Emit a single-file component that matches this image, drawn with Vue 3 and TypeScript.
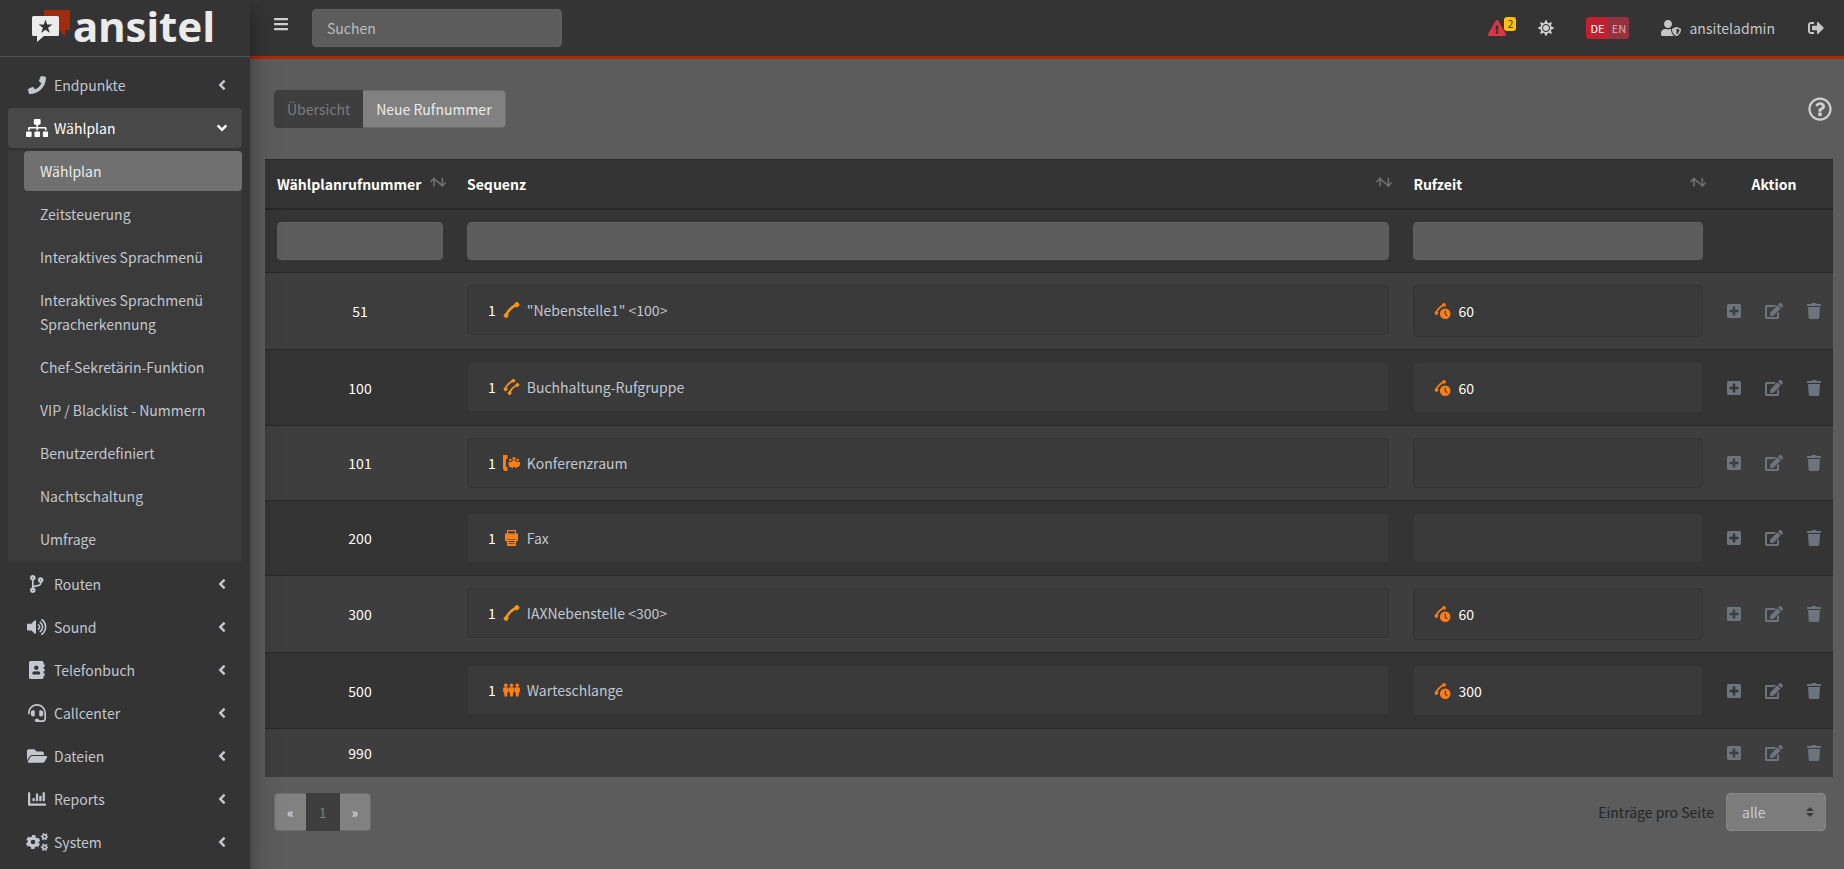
<script setup lang="ts">
import { h, ref } from 'vue'

interface IconDef {
  w: number
  h: number
  body: string
}

const fa = (w: number, d: string): IconDef => ({ w, h: 512, body: `<path d="${d}"/>` })

const icons: Record<string, IconDef> = {
  bars: fa(448, 'M16 132h416c8.8 0 16-7.2 16-16V76c0-8.8-7.2-16-16-16H16C7.2 60 0 67.2 0 76v40c0 8.8 7.2 16 16 16zm0 160h416c8.8 0 16-7.2 16-16v-40c0-8.8-7.2-16-16-16H16c-8.8 0-16 7.2-16 16v40c0 8.8 7.2 16 16 16zm0 160h416c8.8 0 16-7.2 16-16v-40c0-8.8-7.2-16-16-16H16c-8.8 0-16 7.2-16 16v40c0 8.8 7.2 16 16 16z'),
  phone: fa(512, 'M493.4 24.6l-104-24c-11.3-2.6-22.9 3.3-27.5 13.9l-48 112c-4.2 9.8-1.4 21.3 6.9 28l60.6 49.6c-36 76.7-98.9 140.5-177.2 177.2l-49.6-60.6c-6.8-8.3-18.2-11.1-28-6.9l-112 48C3.9 366.5-2 378.1.6 389.4l24 104C27.1 504.2 36.7 512 48 512c256.1 0 464-207.5 464-464 0-11.2-7.7-20.9-18.6-23.4z'),
  sitemap: fa(640, 'M128 352H32c-17.67 0-32 14.33-32 32v96c0 17.67 14.33 32 32 32h96c17.67 0 32-14.33 32-32v-96c0-17.67-14.33-32-32-32zm-24-80h192v48h48v-48h192v48h48v-57.59c0-21.17-17.23-38.41-38.41-38.41H344v-64h40c17.67 0 32-14.33 32-32V32c0-17.67-14.33-32-32-32H256c-17.67 0-32 14.33-32 32v96c0 17.67 14.33 32 32 32h40v64H94.41C73.23 224 56 241.23 56 262.41V320h48v-48zm264 80h-96c-17.67 0-32 14.33-32 32v96c0 17.67 14.33 32 32 32h96c17.67 0 32-14.33 32-32v-96c0-17.67-14.33-32-32-32zm240 0h-96c-17.67 0-32 14.33-32 32v96c0 17.67 14.33 32 32 32h96c17.67 0 32-14.33 32-32v-96c0-17.67-14.33-32-32-32z'),
  branch: fa(384, 'M384 144c0-44.2-35.8-80-80-80s-80 35.8-80 80c0 36.4 24.3 67.1 57.5 76.8-.6 16.1-4.2 28.5-11 36.9-15.4 19.2-49.3 22.4-85.2 25.7-28.2 2.6-57.4 5.4-81.3 16.9v-144c32.5-10.2 56-40.5 56-76.3 0-44.2-35.8-80-80-80S0 35.8 0 80c0 35.8 23.5 66.1 56 76.3v199.3C23.5 365.9 0 396.2 0 432c0 44.2 35.8 80 80 80s80-35.8 80-80c0-34-21.2-63.1-51.2-74.6 3.1-5.2 7.8-9.8 14.9-13.4 16.2-8.2 40.4-10.4 66.1-12.8 42.2-3.9 90-8.4 118.2-43.4 14-17.4 21.1-39.8 21.6-67.9 31.6-10.8 54.4-40.7 54.4-75.9zM80 64c8.8 0 16 7.2 16 16s-7.2 16-16 16-16-7.2-16-16 7.2-16 16-16zm0 384c-8.8 0-16-7.2-16-16s7.2-16 16-16 16 7.2 16 16-7.2 16-16 16zm224-320c8.8 0 16 7.2 16 16s-7.2 16-16 16-16-7.2-16-16 7.2-16 16-16z'),
  volume: {
    w: 576,
    h: 512,
    body: '<path d="M215.03 71.05L126.06 160H24c-13.26 0-24 10.74-24 24v144c0 13.25 10.74 24 24 24h102.06l88.97 88.95c15.03 15.03 40.97 4.47 40.97-16.97V88.02c0-21.46-25.96-31.98-40.97-16.97z"/><path fill="none" stroke="currentColor" stroke-width="46" stroke-linecap="round" d="M326 196a72 72 0 0 1 0 120M376 124a164 164 0 0 1 0 264M424 50a256 256 0 0 1 0 412"/>'
  },
  book: fa(448, 'M436 160c6.6 0 12-5.4 12-12v-40c0-6.6-5.4-12-12-12h-20V48c0-26.5-21.5-48-48-48H48C21.5 0 0 21.5 0 48v416c0 26.5 21.5 48 48 48h320c26.5 0 48-21.5 48-48v-48h20c6.6 0 12-5.4 12-12v-40c0-6.6-5.4-12-12-12h-20v-64h20c6.6 0 12-5.4 12-12v-40c0-6.6-5.4-12-12-12h-20v-64h20zm-228-32c35.3 0 64 28.7 64 64s-28.7 64-64 64-64-28.7-64-64 28.7-64 64-64zm112 236.8c0 10.6-10 19.2-22.4 19.2H118.4C106 384 96 375.4 96 364.8v-19.2c0-31.8 30.1-57.6 67.2-57.6h5c12.3 5.1 25.7 8 39.8 8s27.6-2.9 39.8-8h5c37.1 0 67.2 25.8 67.2 57.6v19.2z'),
  headset: fa(512, 'M192 208c0-17.67-14.33-32-32-32h-16c-35.35 0-64 28.65-64 64v48c0 35.35 28.65 64 64 64h16c17.67 0 32-14.33 32-32V208zm176 144c35.35 0 64-28.65 64-64v-48c0-35.35-28.65-64-64-64h-16c-17.67 0-32 14.33-32 32v112c0 17.67 14.33 32 32 32h16zM256 0C113.18 0 4.58 118.83 0 256v16c0 8.84 7.16 16 16 16h16c8.84 0 16-7.16 16-16v-16c0-114.69 93.31-208 208-208s208 93.31 208 208h-.12c.08 2.43.12 165.72.12 165.72 0 23.35-18.93 42.28-42.28 42.28H320c0-26.51-21.49-48-48-48h-32c-26.51 0-48 21.49-48 48s21.49 48 48 48h181.72c49.86 0 90.28-40.42 90.28-90.28V256C507.42 118.83 398.82 0 256 0z'),
  folder: fa(576, 'M572.694 292.093L500.27 416.248A63.997 63.997 0 0 1 444.989 448H45.025c-18.523 0-30.064-20.093-20.731-36.093l72.424-124.155A64 64 0 0 1 152 256h399.964c18.523 0 30.064 20.093 20.73 36.093zM152 224h328v-48c0-26.51-21.49-48-48-48H272l-64-64H48C21.49 64 0 85.49 0 112v278.046l69.077-118.418C86.214 242.25 117.989 224 152 224z'),
  chart: fa(512, 'M332.8 320h38.4c6.4 0 12.8-6.4 12.8-12.8V172.8c0-6.4-6.4-12.8-12.8-12.8h-38.4c-6.4 0-12.8 6.4-12.8 12.8v134.4c0 6.4 6.4 12.8 12.8 12.8zm96 0h38.4c6.4 0 12.8-6.4 12.8-12.8V76.8c0-6.4-6.4-12.8-12.8-12.8h-38.4c-6.4 0-12.8 6.4-12.8 12.8v230.4c0 6.4 6.4 12.8 12.8 12.8zm-288 0h38.4c6.4 0 12.8-6.4 12.8-12.8v-70.4c0-6.4-6.4-12.8-12.8-12.8h-38.4c-6.4 0-12.8 6.4-12.8 12.8v70.4c0 6.4 6.4 12.8 12.8 12.8zm96 0h38.4c6.4 0 12.8-6.4 12.8-12.8V108.8c0-6.4-6.4-12.8-12.8-12.8h-38.4c-6.4 0-12.8 6.4-12.8 12.8v198.4c0 6.4 6.4 12.8 12.8 12.8zM496 384H64V80c0-8.84-7.16-16-16-16H16C7.16 64 0 71.16 0 80v336c0 17.67 14.33 32 32 32h464c8.84 0 16-7.16 16-16v-32c0-8.84-7.16-16-16-16z'),
  cogs: {
    w: 640,
    h: 512,
    body: '<g fill="none" stroke="currentColor"><circle cx="200" cy="256" r="112" stroke-width="92"/><circle cx="200" cy="256" r="172" stroke-width="56" pathLength="60" stroke-dasharray="5.6 4.4" stroke-dashoffset="-2.2"/><circle cx="528" cy="104" r="54" stroke-width="44"/><circle cx="528" cy="104" r="88" stroke-width="38" pathLength="60" stroke-dasharray="5 5" stroke-dashoffset="2.5"/><circle cx="528" cy="408" r="54" stroke-width="44"/><circle cx="528" cy="408" r="88" stroke-width="38" pathLength="60" stroke-dasharray="5 5" stroke-dashoffset="2.5"/></g>'
  },
  angle: fa(256, 'M31.7 239l136-136c9.4-9.4 24.6-9.4 33.9 0l22.6 22.6c9.4 9.4 9.4 24.6 0 33.9L127.9 256l96.4 96.4c9.4 9.4 9.4 24.6 0 33.9L201.7 409c-9.4 9.4-24.6 9.4-33.9 0l-136-136c-9.5-9.4-9.5-24.6-.1-34z'),
  warning: fa(576, 'M569.517 440.013C587.975 472.007 564.806 512 527.94 512H48.054c-36.937 0-59.999-40.055-41.577-71.987L246.423 23.985c18.467-32.009 64.72-31.951 83.154 0l239.94 416.028zM288 354c-25.405 0-46 20.595-46 46s20.595 46 46 46 46-20.595 46-46-20.595-46-46-46zm-43.673-165.346l7.418 136c.347 6.364 5.609 11.346 11.982 11.346h48.546c6.373 0 11.635-4.982 11.982-11.346l7.418-136c.375-6.874-5.098-12.654-11.982-12.654h-63.383c-6.884 0-12.356 5.78-11.981 12.654z'),
  sun: fa(512, 'M256 160c-52.9 0-96 43.1-96 96s43.1 96 96 96 96-43.1 96-96-43.1-96-96-96zm246.4 80.5l-94.7-47.3 33.5-100.4c4.5-13.6-8.4-26.5-21.9-21.9l-100.4 33.5-47.4-94.8c-6.4-12.8-24.6-12.8-31 0l-47.3 94.7L92.7 70.8c-13.6-4.5-26.5 8.4-21.9 21.9l33.5 100.4-94.7 47.4c-12.8 6.4-12.8 24.6 0 31l94.7 47.3-33.5 100.5c-4.5 13.6 8.4 26.5 21.9 21.9l100.4-33.5 47.3 94.7c6.4 12.8 24.6 12.8 31 0l47.3-94.7 100.4 33.5c13.6 4.5 26.5-8.4 21.9-21.9l-33.5-100.4 94.7-47.3c13-6.5 13-24.7.2-31.1zm-155.9 106c-49.9 49.9-131.1 49.9-181 0-49.9-49.9-49.9-131.1 0-181 49.9-49.9 131.1-49.9 181 0 49.9 49.9 49.9 131.1 0 181z'),
  user: fa(640, 'M622.3 271.1l-115.2-45c-4.1-1.6-12.6-3.7-22.2 0l-115.2 45c-10.7 4.2-17.7 14-17.7 24.9 0 111.6 68.7 188.8 132.9 213.9 9.6 3.7 18 1.6 22.2 0C558.4 489.9 640 420.5 640 296c0-10.9-7-20.7-17.7-24.9zM496 462.4V273.3l95.5 37.3c-5.6 87.1-60.9 135.4-95.5 151.8zM224 256c70.7 0 128-57.3 128-128S294.7 0 224 0 96 57.3 96 128s57.3 128 128 128zm96 40c0-2.5.8-4.8 1.1-7.2-2.5-.1-4.9-.8-7.5-.8h-16.7c-22.2 10.2-46.9 16-72.9 16s-50.6-5.8-72.9-16h-16.7C60.2 288 0 348.2 0 422.4V464c0 26.5 21.5 48 48 48h352c6.8 0 13.3-1.5 19.2-4-54-42.9-99.2-116.7-99.2-212z'),
  logout: fa(512, 'M497 273L329 441c-15 15-41 4.5-41-17v-96H152c-13.3 0-24-10.7-24-24v-96c0-13.3 10.7-24 24-24h136V88c0-21.4 25.9-32 41-17l168 168c9.3 9.4 9.3 24.6 0 34zM192 436v-40c0-6.6-5.4-12-12-12H96c-17.7 0-32-14.3-32-32V160c0-17.7 14.3-32 32-32h84c6.6 0 12-5.4 12-12V76c0-6.6-5.4-12-12-12H96c-53 0-96 43-96 96v192c0 53 43 96 96 96h84c6.6 0 12-5.4 12-12z'),
  help: fa(512, 'M256 8C119.043 8 8 119.083 8 256c0 136.997 111.043 248 248 248s248-111.003 248-248C504 119.083 392.957 8 256 8zm0 448c-110.532 0-200-89.431-200-200 0-110.495 89.472-200 200-200 110.491 0 200 89.471 200 200 0 110.53-89.431 200-200 200zm107.244-255.2c0 67.052-72.421 68.084-72.421 92.863V300c0 6.627-5.373 12-12 12h-45.647c-6.627 0-12-5.373-12-12v-8.659c0-35.745 27.1-50.034 47.579-61.516 17.561-9.845 28.324-16.541 28.324-29.579 0-17.246-21.999-28.693-39.784-28.693-23.189 0-33.894 10.977-48.942 29.969-4.057 5.12-11.46 6.071-16.666 2.124l-27.824-21.098c-5.107-3.872-6.251-11.066-2.644-16.363C184.846 131.491 214.94 112 261.794 112c49.071 0 101.45 38.304 101.45 88.8zM298 368c0 23.159-18.841 42-42 42s-42-18.841-42-42 18.841-42 42-42 42 18.841 42 42z'),
  plus: fa(448, 'M400 32H48C21.5 32 0 53.5 0 80v352c0 26.5 21.5 48 48 48h352c26.5 0 48-21.5 48-48V80c0-26.5-21.5-48-48-48zm-32 252c0 6.6-5.4 12-12 12h-92v92c0 6.6-5.4 12-12 12h-56c-6.6 0-12-5.4-12-12v-92H92c-6.6 0-12-5.4-12-12v-56c0-6.6 5.4-12 12-12h92v-92c0-6.6 5.4-12 12-12h56c6.6 0 12 5.4 12 12v92h92c6.6 0 12 5.4 12 12v56z'),
  edit: fa(576, 'M402.6 83.2l90.2 90.2c3.8 3.8 3.8 10 0 13.8L274.4 405.6l-92.8 10.3c-12.4 1.4-22.9-9.1-21.5-21.5l10.3-92.8L388.8 83.2c3.8-3.8 10-3.8 13.8 0zm162-22.9l-48.8-48.8c-15.2-15.2-39.9-15.2-55.2 0l-35.4 35.4c-3.8 3.8-3.8 10 0 13.8l90.2 90.2c3.8 3.8 10 3.8 13.8 0l35.4-35.4c15.2-15.3 15.2-40 0-55.2zM384 346.2V448H64V128h229.8c3.2 0 6.2-1.3 8.5-3.5l40-40c7.6-7.6 2.2-20.5-8.5-20.5H48C21.5 64 0 85.5 0 112v352c0 26.5 21.5 48 48 48h352c26.5 0 48-21.5 48-48V306.2c0-10.7-12.9-16-20.5-8.5l-40 40c-2.2 2.3-3.5 5.3-3.5 8.5z'),
  trash: fa(448, 'M432 32H312l-9.4-18.7A24 24 0 0 0 281.1 0H166.8a23.72 23.72 0 0 0-21.4 13.3L136 32H16A16 16 0 0 0 0 48v32a16 16 0 0 0 16 16h416a16 16 0 0 0 16-16V48a16 16 0 0 0-16-16zM53.2 467a48 48 0 0 0 47.9 45h245.8a48 48 0 0 0 47.9-45L416 128H32z'),
  sort: {
    w: 16,
    h: 16,
    body: '<path fill="none" stroke="currentColor" stroke-width="1.6" d="M4 10.5V2.5M.5 6L4 2.5 7.5 6M12.300 2V10M8.800 6.500L12.300 10l3.400-3.500M6.800 5.200l2.600 2"/>'
  },
  handset: {
    w: 16,
    h: 16,
    body: '<path fill="none" stroke="currentColor" stroke-width="2.6" d="M2.5 13C4.5 9 9 4.5 13 2.8"/><path d="M.1 13L2.6 10.4l2.8 2.4-1.6 2.9-1.6.2L.2 14.3zM10.4 2.6L12.2.3 14 0l2 2.2-.3 1.7-2.9 1.6z"/>'
  },
  group: {
    w: 16,
    h: 16,
    body: '<path fill="none" stroke="currentColor" stroke-width="1.9" d="M1.8 9.5C3 6.5 6 3.5 9.5 2M6.2 13.5C7.5 10.5 10.5 7.5 14 6"/><path d="M0 9.7L2 7.8l2.4 2.2-1.9 2.2-1.5-.1zM7.4 1.8L9.2 0h1.4l1.6 1.8L10 4.1zM4 13.7l2-1.9L8.4 14l-1.7 2H5.4zM11.6 5.8l1.7-1.9 1.4.1L16 5.900l-1.900 2.300z"/>'
  },
  conference: {
    w: 17,
    h: 16,
    body: '<path d="M0 0h4.5v4H3v8h1.5v4h-3L0 14z"/><circle cx="11" cy="3.5" r="1.6"/><circle cx="7.3" cy="5" r="1.3"/><circle cx="14.7" cy="5" r="1.3"/><path d="M5.5 7h3l1-1.5h3l1 1.5H17v3.5h-1V12h-2.5v1.3h-1.200V12H10v1.300H8.500V12H6v-1.500h-.5z"/>'
  },
  fax: {
    w: 16,
    h: 16,
    body: '<path fill-rule="evenodd" d="M3.5 0h9v3.500h2v7l-1.500 1h-.5V16h-9v-4.500H3l-1.500-1v-7h2zM4.700 1.200v2.300h6.600V1.200zM3.500 9v.6h9V9zM5 11v.9h6V11zM5 13.200v.9h6v-.9z"/>'
  },
  queue: {
    w: 17,
    h: 16,
    body: '<circle cx="2.8" cy="3.2" r="1.8"/><circle cx="8.5" cy="3.2" r="1.8"/><circle cx="14.2" cy="3.2" r="1.8"/><path d="M.8 5.2h4l.7 1v3.600l-1 .6-.4 4H1.500l-.4-4-1-.6V6.200zM6.500 5.200h4l.7 1v3.600l-1 .6-.4 4H7.200l-.4-4-1-.6V6.200zM12.200 5.200h4l.7 1v3.600l-1 .6-.4 4h-2.600l-.4-4-1-.6V6.200z"/>'
  },
  timeout: {
    w: 16,
    h: 16,
    body: '<path fill="none" stroke="currentColor" stroke-width="1.7" d="M1.5 9.5C3 6.5 6 3.5 9.5 1.7"/><path d="M0 9.600L1.800 8l2.300 1.800L2.400 12 .8 11.800zM7.400 1.500L9 0l1.500.2 1.200 2L9.700 4z"/><path fill-rule="evenodd" d="M10.700 5.400a5.300 5.300 0 1 0 0 10.600 5.300 5.300 0 0 0 0-10.600zM10.200 7.500h1.100v3l1.800 1.900-.9.800-2-2.200z"/>'
  }
}

const Icon = (props: { name: string }) => {
  const def = icons[props.name]
  return h('svg', {
    viewBox: `0 0 ${def.w} ${def.h}`,
    fill: 'currentColor',
    'aria-hidden': 'true',
    innerHTML: def.body
  })
}
Icon.props = ['name']

const submenu = [
  'Wählplan',
  'Zeitsteuerung',
  'Interaktives Sprachmenü',
  'Interaktives Sprachmenü Spracherkennung',
  'Chef-Sekretärin-Funktion',
  'VIP / Blacklist - Nummern',
  'Benutzerdefiniert',
  'Nachtschaltung',
  'Umfrage'
]

const menu: { label: string; icon: string; children?: string[] }[] = [
  { label: 'Endpunkte', icon: 'phone' },
  { label: 'Wählplan', icon: 'sitemap', children: submenu },
  { label: 'Routen', icon: 'branch' },
  { label: 'Sound', icon: 'volume' },
  { label: 'Telefonbuch', icon: 'book' },
  { label: 'Callcenter', icon: 'headset' },
  { label: 'Dateien', icon: 'folder' },
  { label: 'Reports', icon: 'chart' },
  { label: 'System', icon: 'cogs' }
]

interface Row {
  number: string
  target?: string
  icon?: string
  timeout?: string
}

const rows: Row[] = [
  { number: '51', target: '"Nebenstelle1" <100>', icon: 'handset', timeout: '60' },
  { number: '100', target: 'Buchhaltung-Rufgruppe', icon: 'group', timeout: '60' },
  { number: '101', target: 'Konferenzraum', icon: 'conference' },
  { number: '200', target: 'Fax', icon: 'fax' },
  { number: '300', target: 'IAXNebenstelle <300>', icon: 'handset', timeout: '60' },
  { number: '500', target: 'Warteschlange', icon: 'queue', timeout: '300' },
  { number: '990' }
]

const columns = [
  { key: 'number', label: 'Wählplanrufnummer' },
  { key: 'sequence', label: 'Sequenz' },
  { key: 'timeout', label: 'Rufzeit' }
]

const search = ref('')
const filters = ref<Record<string, string>>({ number: '', sequence: '', timeout: '' })
const pageSize = ref('alle')
</script>

<template>
  <div class="layout">
    <aside class="sidebar">
      <a class="brand" href="#" aria-label="ansitel">
        <svg class="brand-mark" viewBox="0 0 38 32" aria-hidden="true">
          <path fill="#a02c0d" d="M13 0h24q1 0 1 1v18q0 1-1 1h-4v6l-6-6H13q-1 0-1-1V1q0-1 1-1z" />
          <path fill="#ebebeb" d="M1.500 6h24q1.500 0 1.500 1.500v17q0 1.500-1.500 1.500H12l-7 6v-6H1.500Q0 26 0 24.500v-17Q0 6 1.500 6z" />
          <path fill="#343434" d="M13.500 9.500l1.600 5.100h5.300l-4.300 3.100 1.700 5.200-4.300-3.200-4.300 3.200 1.700-5.200-4.300-3.100h5.300z" />
        </svg>
        <span class="brand-text">ansitel</span>
      </a>
      <nav class="nav">
        <ul class="nav-list">
          <li v-for="item in menu" :key="item.label">
            <a class="nav-link" :class="{ open: item.children }" href="#">
              <span class="nav-icon"><Icon :name="item.icon" class="glyph" /></span>
              <span>{{ item.label }}</span>
              <Icon name="angle" class="angle" />
            </a>
            <ul v-if="item.children" class="subnav">
              <li v-for="(child, i) in item.children" :key="child">
                <a class="sub-link" :class="{ active: i === 0 }" href="#">{{ child }}</a>
              </li>
            </ul>
          </li>
        </ul>
      </nav>
    </aside>

    <div class="page">
      <header class="topbar">
        <button class="icon-button menu-button" type="button" aria-label="Menü">
          <Icon name="bars" class="icon16" />
        </button>
        <input v-model="search" class="search" type="search" placeholder="Suchen" aria-label="Suchen" />
        <div class="tools">
          <a class="alerts" href="#" aria-label="Warnungen">
            <Icon name="warning" class="icon16" />
            <span class="badge">2</span>
          </a>
          <button class="icon-button sun" type="button" aria-label="Helles Design">
            <Icon name="sun" class="icon16" />
          </button>
          <div class="language" role="group" aria-label="Sprache">
            <button class="lang selected" type="button">DE</button>
            <button class="lang" type="button">EN</button>
          </div>
          <a class="account" href="#"><Icon name="user" class="icon16" />ansiteladmin</a>
          <a class="logout" href="#" aria-label="Abmelden"><Icon name="logout" class="icon16" /></a>
        </div>
      </header>

      <main class="content">
        <div class="toolbar">
          <div class="tabs">
            <button class="tab current" type="button">Übersicht</button>
            <button class="tab" type="button">Neue Rufnummer</button>
          </div>
          <button class="icon-button" type="button" aria-label="Hilfe">
            <Icon name="help" class="icon24" />
          </button>
        </div>

        <table class="plan">
          <colgroup>
            <col class="col-number" />
            <col />
            <col class="col-timeout" />
            <col class="col-actions" />
          </colgroup>
          <thead>
            <tr class="titles">
              <th v-for="col in columns" :key="col.key" scope="col">
                <button class="sorter" type="button">
                  <span>{{ col.label }}</span>
                  <Icon name="sort" class="icon16 sort-icon" />
                </button>
              </th>
              <th class="center" scope="col">Aktion</th>
            </tr>
            <tr>
              <td v-for="col in columns" :key="col.key">
                <input v-model="filters[col.key]" class="filter" type="text" :aria-label="col.label" />
              </td>
              <td></td>
            </tr>
          </thead>
          <tbody>
            <tr v-for="row in rows" :key="row.number">
              <td class="number">{{ row.number }}</td>
              <td class="top">
                <div v-if="row.target" class="box">
                  <span>1</span>
                  <Icon :name="row.icon!" class="target-icon" :class="{ amber: row.icon === 'handset' || row.icon === 'group' }" />
                  <span class="target">{{ row.target }}</span>
                </div>
              </td>
              <td class="top">
                <div v-if="row.target" class="box" :class="{ tall: row.timeout }">
                  <template v-if="row.timeout">
                    <Icon name="timeout" class="target-icon" />
                    <span>{{ row.timeout }}</span>
                  </template>
                </div>
              </td>
              <td class="actions-cell">
                <div class="actions">
                  <button class="action" type="button" aria-label="Hinzufügen"><Icon name="plus" class="icon16" /></button>
                  <button class="action" type="button" aria-label="Bearbeiten"><Icon name="edit" class="icon16" /></button>
                  <button class="action" type="button" aria-label="Löschen"><Icon name="trash" class="icon16" /></button>
                </div>
              </td>
            </tr>
          </tbody>
        </table>

        <footer class="table-footer">
          <nav class="pages" aria-label="Seiten">
            <button class="page-button" type="button">«</button>
            <button class="page-button current" type="button">1</button>
            <button class="page-button" type="button">»</button>
          </nav>
          <div class="page-size">
            <label for="page-size">Einträge pro Seite</label>
            <div class="select-wrap">
              <select id="page-size" v-model="pageSize" class="select">
                <option value="alle">alle</option>
                <option value="25">25</option>
                <option value="50">50</option>
              </select>
              <svg class="caret" viewBox="0 0 8 10" aria-hidden="true">
                <path fill="#343a40" d="M4 0L0 4h8zM4 10L0 6h8z" />
              </svg>
            </div>
          </div>
        </footer>
      </main>
    </div>
  </div>
</template>

<style>
body {
  margin: 0;
  background: #5c5c5c;
}
</style>

<style scoped>
.layout,
.layout * {
  box-sizing: border-box;
}

.layout {
  display: flex;
  min-height: 100vh;
  background: #5c5c5c;
  color: #fff;
  font-family: "Noto Sans CJK JP", "Noto Sans CJK SC", sans-serif;
  font-size: 14px;
  line-height: 24px;
}

button,
input,
select {
  margin: 0;
  font: inherit;
}

button {
  cursor: pointer;
}

a {
  color: inherit;
  text-decoration: none;
}

ul {
  margin: 0;
  padding: 0;
  list-style: none;
}

svg {
  display: block;
  flex: none;
}

.icon16 {
  height: 16px;
}

.icon24 {
  height: 24px;
}

.icon-button {
  display: flex;
  padding: 0;
  border: 0;
  background: none;
  color: #d0d0d0;
}

/* sidebar */
.sidebar {
  position: relative;
  z-index: 2;
  flex: none;
  width: 250px;
  background: #343434;
  color: #c2c7d0;
  box-shadow: 0 14px 28px rgba(0, 0, 0, 0.25), 0 10px 10px rgba(0, 0, 0, 0.22);
}

.brand {
  display: flex;
  align-items: center;
  gap: 3px;
  height: 57px;
  padding: 0 32px 4px;
  border-bottom: 1px solid #4b545c;
}

.brand-mark {
  width: 38px;
  height: 32px;
}

.brand-text {
  color: #ebebeb;
  font-family: "Noto Sans", "Open Sans", sans-serif;
  font-size: 42px;
  font-weight: 700;
  line-height: 48px;
}

.nav {
  padding: 8px;
}

.nav-list,
.subnav {
  display: flex;
  flex-direction: column;
  gap: 3px;
}

.nav-link {
  display: flex;
  align-items: center;
  gap: 4px;
  padding: 8px 16px;
  border-radius: 4px;
}

.nav-link.open {
  margin-bottom: 3px;
  background: #484848;
  color: #fff;
}

.nav-icon {
  display: flex;
  justify-content: center;
  width: 26px;
}

.glyph {
  height: 18px;
}

.angle {
  height: 16px;
  margin-left: auto;
}

.open .angle {
  transform: rotate(-90deg);
}

.subnav {
  padding-bottom: 2px;
  background: #3b3b3b;
}

.sub-link {
  display: block;
  margin-left: 16px;
  padding: 8px 16px;
  border-radius: 4px;
}

.sub-link.active {
  background: #707070;
  color: #ececec;
}

/* top bar */
.page {
  flex: 1;
  min-width: 0;
}

.topbar {
  display: flex;
  align-items: center;
  height: 59px;
  padding: 0 20px 0 24px;
  border-bottom: 3px solid #a92b0b;
  background: #343434;
}

.menu-button {
  margin-right: 24px;
  padding-bottom: 8px;
}

.search {
  width: 250px;
  height: 38px;
  padding: 0 14px;
  border: 1px solid #606060;
  border-radius: 4px;
  outline: 0;
  background: #5c5c5c;
  color: #fff;
  appearance: none;
}

.search::placeholder {
  color: #bdbdbd;
  opacity: 1;
}

.tools {
  display: flex;
  align-items: center;
  margin-left: auto;
  color: #c6c6c6;
}

.alerts {
  position: relative;
  color: #dc3545;
}

.badge {
  position: absolute;
  top: -3px;
  left: 16px;
  width: 12px;
  height: 14px;
  border-radius: 3px;
  background: #ffc107;
  color: #343434;
  font-size: 10px;
  line-height: 14px;
  text-align: center;
}

.sun {
  margin-left: 32px;
}

.language {
  display: flex;
  margin-left: 32px;
  overflow: hidden;
  border-radius: 3px;
}

.lang {
  width: 21px;
  height: 22px;
  padding: 0;
  border: 0;
  background: #96323d;
  color: #d8b0b4;
  font-size: 11px;
  line-height: 22px;
}

.lang.selected {
  width: 22px;
  background: #c21f30;
  color: #fff;
}

.account {
  display: flex;
  align-items: center;
  gap: 8px;
  margin-left: 32px;
}

.logout {
  margin-left: 33px;
}

/* content */
.content {
  padding: 31px 11px 0 15px;
}

.toolbar {
  display: flex;
  align-items: center;
  justify-content: space-between;
  padding: 0 1px 0 9px;
}

.tabs,
.pages {
  display: flex;
}

.tab {
  height: 38px;
  padding: 0 13px;
  border: 1px solid #6c6c6c;
  border-left: 0;
  border-radius: 0 4px 4px 0;
  background: #818181;
  color: #ececec;
}

.tab.current {
  padding: 0 12px;
  border: 1px solid #3e3e3e;
  border-radius: 4px 0 0 4px;
  background: #3e3e3e;
  color: #7c7c7c;
}

.plan {
  width: 100%;
  margin-top: 31px;
  border-spacing: 0;
  background: #343434;
  table-layout: fixed;
}

.col-number {
  width: 190px;
}

.col-timeout {
  width: 20%;
}

.col-actions {
  width: 118px;
}

th,
td {
  padding: 12px;
  text-align: left;
}

.titles th {
  padding-right: 9px;
  border-top: 1px solid #292929;
  border-bottom: 2px solid #292929;
  font-weight: 700;
}

.titles .center {
  padding: 12px;
  text-align: center;
}

.sorter {
  display: flex;
  align-items: center;
  justify-content: space-between;
  width: 100%;
  padding: 0;
  border: 0;
  background: none;
  color: inherit;
}

.sort-icon {
  color: #6f6f6f;
}

.filter {
  display: block;
  width: 100%;
  height: 38px;
  padding: 0 12px;
  border: 1px solid #606060;
  border-radius: 4px;
  outline: 0;
  background: #5c5c5c;
  color: #fff;
}

tbody td {
  border-top: 1px solid #292929;
}

tbody tr:nth-child(odd) {
  background: #3e3e3e;
}

.number {
  text-align: center;
}

.top {
  vertical-align: top;
}

.box {
  display: flex;
  align-items: center;
  gap: 7px;
  height: 50px;
  padding: 0 20px;
  border: 1px solid #343434;
  border-radius: 4px;
  background: #3a3a3a;
}

.box.tall {
  height: 52px;
}

tr:nth-child(even) .box.tall {
  height: 51px;
}

.target-icon {
  width: 17px;
  height: 16px;
  color: #fd7e14;
}

.amber {
  color: #f7941d;
}

.target {
  color: #c2c7d0;
}

.actions-cell {
  padding: 0;
}

.actions {
  display: flex;
  justify-content: center;
  gap: 16px;
}

.action {
  display: flex;
  align-items: center;
  justify-content: center;
  width: 24px;
  height: 24px;
  padding: 0;
  border: 0;
  background: none;
  color: #6c757d;
}

.table-footer {
  display: flex;
  justify-content: space-between;
  padding: 16px 7px 0 9px;
}

.page-button {
  height: 38px;
  padding: 0 12px;
  border: 1px solid #6c6c6c;
  background: #818181;
  color: #ececec;
}

.page-button:first-child {
  border-right: 0;
  border-radius: 4px 0 0 4px;
}

.page-button:last-child {
  border-left: 0;
  border-radius: 0 4px 4px 0;
}

.page-button.current {
  border-color: #3e3e3e;
  background: #3e3e3e;
  color: #7c7c7c;
}

.page-size {
  display: flex;
  align-items: center;
  gap: 12px;
  color: #212529;
}

.select-wrap {
  position: relative;
}

.select {
  display: block;
  width: 100px;
  height: 38px;
  padding: 0 28px 0 15px;
  border: 1px solid #868686;
  border-radius: 4px;
  background: #7c7c7c;
  color: #c8ccd2;
  appearance: none;
}

.caret {
  position: absolute;
  top: 14px;
  right: 12px;
  width: 8px;
  height: 10px;
  pointer-events: none;
}
</style>
